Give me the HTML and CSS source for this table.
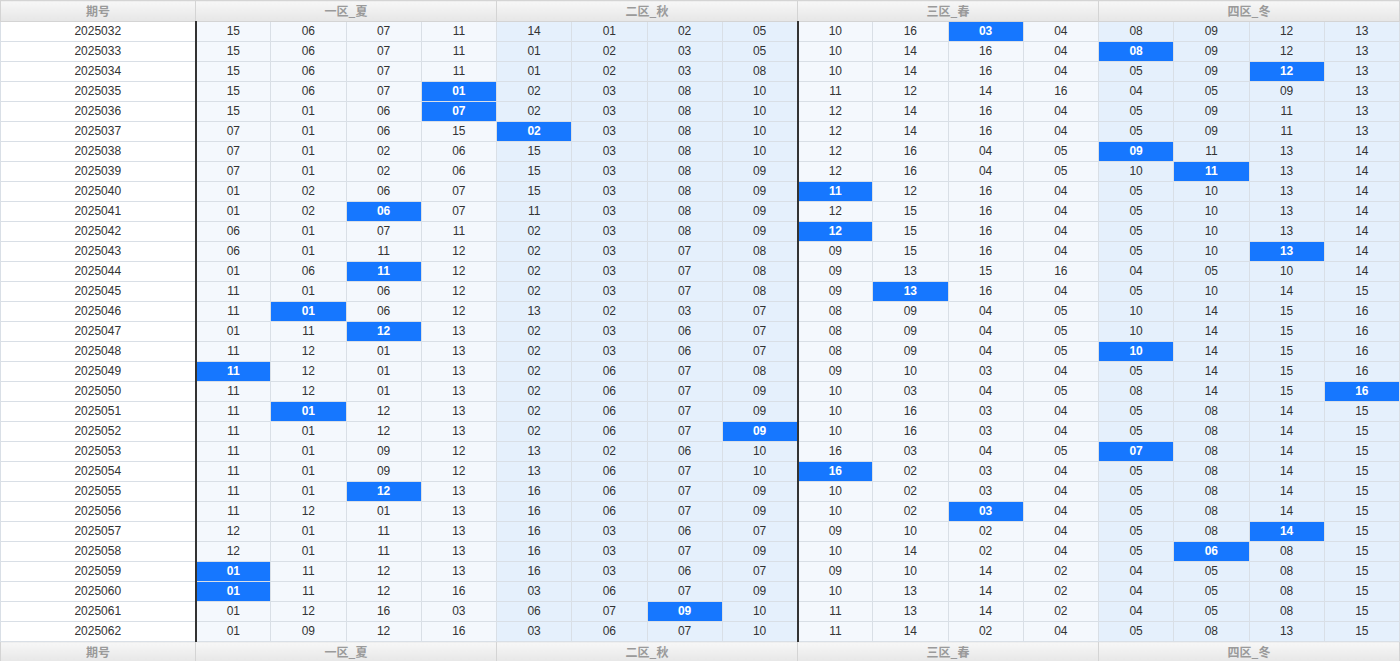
FILE: index.html
```html
<!DOCTYPE html>
<html lang="zh">
<head>
<meta charset="utf-8">
<title>期号分区</title>
<link rel="stylesheet" href="styles.css">
</head>
<body>
<table class="grid">
<colgroup>
<col class="c-q">
<col class="c-a"><col class="c-a"><col class="c-a"><col class="c-a">
<col class="c-b"><col class="c-b"><col class="c-b"><col class="c-b">
<col class="c-a"><col class="c-a"><col class="c-a"><col class="c-a">
<col class="c-b"><col class="c-b"><col class="c-b"><col class="c-b">
</colgroup>
<thead>
<tr><th>期号</th><th colspan="4">一区_夏</th><th colspan="4">二区_秋</th><th colspan="4">三区_春</th><th colspan="4">四区_冬</th></tr>
</thead>
<tbody>
<tr><td>2025032</td><td>15</td><td>06</td><td>07</td><td>11</td><td>14</td><td>01</td><td>02</td><td>05</td><td>10</td><td>16</td><td class="hit">03</td><td>04</td><td>08</td><td>09</td><td>12</td><td>13</td></tr>
<tr><td>2025033</td><td>15</td><td>06</td><td>07</td><td>11</td><td>01</td><td>02</td><td>03</td><td>05</td><td>10</td><td>14</td><td>16</td><td>04</td><td class="hit">08</td><td>09</td><td>12</td><td>13</td></tr>
<tr><td>2025034</td><td>15</td><td>06</td><td>07</td><td>11</td><td>01</td><td>02</td><td>03</td><td>08</td><td>10</td><td>14</td><td>16</td><td>04</td><td>05</td><td>09</td><td class="hit">12</td><td>13</td></tr>
<tr><td>2025035</td><td>15</td><td>06</td><td>07</td><td class="hit">01</td><td>02</td><td>03</td><td>08</td><td>10</td><td>11</td><td>12</td><td>14</td><td>16</td><td>04</td><td>05</td><td>09</td><td>13</td></tr>
<tr><td>2025036</td><td>15</td><td>01</td><td>06</td><td class="hit">07</td><td>02</td><td>03</td><td>08</td><td>10</td><td>12</td><td>14</td><td>16</td><td>04</td><td>05</td><td>09</td><td>11</td><td>13</td></tr>
<tr><td>2025037</td><td>07</td><td>01</td><td>06</td><td>15</td><td class="hit">02</td><td>03</td><td>08</td><td>10</td><td>12</td><td>14</td><td>16</td><td>04</td><td>05</td><td>09</td><td>11</td><td>13</td></tr>
<tr><td>2025038</td><td>07</td><td>01</td><td>02</td><td>06</td><td>15</td><td>03</td><td>08</td><td>10</td><td>12</td><td>16</td><td>04</td><td>05</td><td class="hit">09</td><td>11</td><td>13</td><td>14</td></tr>
<tr><td>2025039</td><td>07</td><td>01</td><td>02</td><td>06</td><td>15</td><td>03</td><td>08</td><td>09</td><td>12</td><td>16</td><td>04</td><td>05</td><td>10</td><td class="hit">11</td><td>13</td><td>14</td></tr>
<tr><td>2025040</td><td>01</td><td>02</td><td>06</td><td>07</td><td>15</td><td>03</td><td>08</td><td>09</td><td class="hit">11</td><td>12</td><td>16</td><td>04</td><td>05</td><td>10</td><td>13</td><td>14</td></tr>
<tr><td>2025041</td><td>01</td><td>02</td><td class="hit">06</td><td>07</td><td>11</td><td>03</td><td>08</td><td>09</td><td>12</td><td>15</td><td>16</td><td>04</td><td>05</td><td>10</td><td>13</td><td>14</td></tr>
<tr><td>2025042</td><td>06</td><td>01</td><td>07</td><td>11</td><td>02</td><td>03</td><td>08</td><td>09</td><td class="hit">12</td><td>15</td><td>16</td><td>04</td><td>05</td><td>10</td><td>13</td><td>14</td></tr>
<tr><td>2025043</td><td>06</td><td>01</td><td>11</td><td>12</td><td>02</td><td>03</td><td>07</td><td>08</td><td>09</td><td>15</td><td>16</td><td>04</td><td>05</td><td>10</td><td class="hit">13</td><td>14</td></tr>
<tr><td>2025044</td><td>01</td><td>06</td><td class="hit">11</td><td>12</td><td>02</td><td>03</td><td>07</td><td>08</td><td>09</td><td>13</td><td>15</td><td>16</td><td>04</td><td>05</td><td>10</td><td>14</td></tr>
<tr><td>2025045</td><td>11</td><td>01</td><td>06</td><td>12</td><td>02</td><td>03</td><td>07</td><td>08</td><td>09</td><td class="hit">13</td><td>16</td><td>04</td><td>05</td><td>10</td><td>14</td><td>15</td></tr>
<tr><td>2025046</td><td>11</td><td class="hit">01</td><td>06</td><td>12</td><td>13</td><td>02</td><td>03</td><td>07</td><td>08</td><td>09</td><td>04</td><td>05</td><td>10</td><td>14</td><td>15</td><td>16</td></tr>
<tr><td>2025047</td><td>01</td><td>11</td><td class="hit">12</td><td>13</td><td>02</td><td>03</td><td>06</td><td>07</td><td>08</td><td>09</td><td>04</td><td>05</td><td>10</td><td>14</td><td>15</td><td>16</td></tr>
<tr><td>2025048</td><td>11</td><td>12</td><td>01</td><td>13</td><td>02</td><td>03</td><td>06</td><td>07</td><td>08</td><td>09</td><td>04</td><td>05</td><td class="hit">10</td><td>14</td><td>15</td><td>16</td></tr>
<tr><td>2025049</td><td class="hit">11</td><td>12</td><td>01</td><td>13</td><td>02</td><td>06</td><td>07</td><td>08</td><td>09</td><td>10</td><td>03</td><td>04</td><td>05</td><td>14</td><td>15</td><td>16</td></tr>
<tr><td>2025050</td><td>11</td><td>12</td><td>01</td><td>13</td><td>02</td><td>06</td><td>07</td><td>09</td><td>10</td><td>03</td><td>04</td><td>05</td><td>08</td><td>14</td><td>15</td><td class="hit">16</td></tr>
<tr><td>2025051</td><td>11</td><td class="hit">01</td><td>12</td><td>13</td><td>02</td><td>06</td><td>07</td><td>09</td><td>10</td><td>16</td><td>03</td><td>04</td><td>05</td><td>08</td><td>14</td><td>15</td></tr>
<tr><td>2025052</td><td>11</td><td>01</td><td>12</td><td>13</td><td>02</td><td>06</td><td>07</td><td class="hit">09</td><td>10</td><td>16</td><td>03</td><td>04</td><td>05</td><td>08</td><td>14</td><td>15</td></tr>
<tr><td>2025053</td><td>11</td><td>01</td><td>09</td><td>12</td><td>13</td><td>02</td><td>06</td><td>10</td><td>16</td><td>03</td><td>04</td><td>05</td><td class="hit">07</td><td>08</td><td>14</td><td>15</td></tr>
<tr><td>2025054</td><td>11</td><td>01</td><td>09</td><td>12</td><td>13</td><td>06</td><td>07</td><td>10</td><td class="hit">16</td><td>02</td><td>03</td><td>04</td><td>05</td><td>08</td><td>14</td><td>15</td></tr>
<tr><td>2025055</td><td>11</td><td>01</td><td class="hit">12</td><td>13</td><td>16</td><td>06</td><td>07</td><td>09</td><td>10</td><td>02</td><td>03</td><td>04</td><td>05</td><td>08</td><td>14</td><td>15</td></tr>
<tr><td>2025056</td><td>11</td><td>12</td><td>01</td><td>13</td><td>16</td><td>06</td><td>07</td><td>09</td><td>10</td><td>02</td><td class="hit">03</td><td>04</td><td>05</td><td>08</td><td>14</td><td>15</td></tr>
<tr><td>2025057</td><td>12</td><td>01</td><td>11</td><td>13</td><td>16</td><td>03</td><td>06</td><td>07</td><td>09</td><td>10</td><td>02</td><td>04</td><td>05</td><td>08</td><td class="hit">14</td><td>15</td></tr>
<tr><td>2025058</td><td>12</td><td>01</td><td>11</td><td>13</td><td>16</td><td>03</td><td>07</td><td>09</td><td>10</td><td>14</td><td>02</td><td>04</td><td>05</td><td class="hit">06</td><td>08</td><td>15</td></tr>
<tr><td>2025059</td><td class="hit">01</td><td>11</td><td>12</td><td>13</td><td>16</td><td>03</td><td>06</td><td>07</td><td>09</td><td>10</td><td>14</td><td>02</td><td>04</td><td>05</td><td>08</td><td>15</td></tr>
<tr><td>2025060</td><td class="hit">01</td><td>11</td><td>12</td><td>16</td><td>03</td><td>06</td><td>07</td><td>09</td><td>10</td><td>13</td><td>14</td><td>02</td><td>04</td><td>05</td><td>08</td><td>15</td></tr>
<tr><td>2025061</td><td>01</td><td>12</td><td>16</td><td>03</td><td>06</td><td>07</td><td class="hit">09</td><td>10</td><td>11</td><td>13</td><td>14</td><td>02</td><td>04</td><td>05</td><td>08</td><td>15</td></tr>
<tr><td>2025062</td><td>01</td><td>09</td><td>12</td><td>16</td><td>03</td><td>06</td><td>07</td><td>10</td><td>11</td><td>14</td><td>02</td><td>04</td><td>05</td><td>08</td><td>13</td><td>15</td></tr>
</tbody>
<tfoot>
<tr><th>期号</th><th colspan="4">一区_夏</th><th colspan="4">二区_秋</th><th colspan="4">三区_春</th><th colspan="4">四区_冬</th></tr>
</tfoot>
</table>
</body>
</html>
```
FILE: styles.css
```css
html, body {
  margin: 0;
  padding: 0;
  background: #ffffff;
}

.grid {
  width: 1400px;
  table-layout: fixed;
  border-collapse: collapse;
  font-family: "Liberation Sans", Arial, "Noto Sans CJK SC", sans-serif;
  font-size: 12px;
  color: #333333;
}

.c-q { width: 195px; background: #ffffff; }
.c-a { background: #f4f8fd; }
.c-b { background: #e5f0fc; }

.grid th {
  height: 20px;
  padding: 0;
  line-height: 20px;
  font-family: "Noto Sans CJK SC", "Liberation Sans", sans-serif;
  font-size: 12px;
  font-weight: bold;
  color: #9a9a9a;
  text-align: center;
  background: linear-gradient(#f7f7f7, #e6e6e6);
  border: 1px solid #d4d4d4;
}

.grid td {
  height: 19px;
  padding: 0;
  line-height: 19px;
  text-align: center;
  border: 1px solid #d9dfe6;
  white-space: nowrap;
}

.grid tbody td:nth-child(2),
.grid tbody td:nth-child(10) {
  border-left: 2px solid #333333;
}

.grid td.hit {
  background: #1677ff;
  color: #ffffff;
  font-weight: bold;
}
```
